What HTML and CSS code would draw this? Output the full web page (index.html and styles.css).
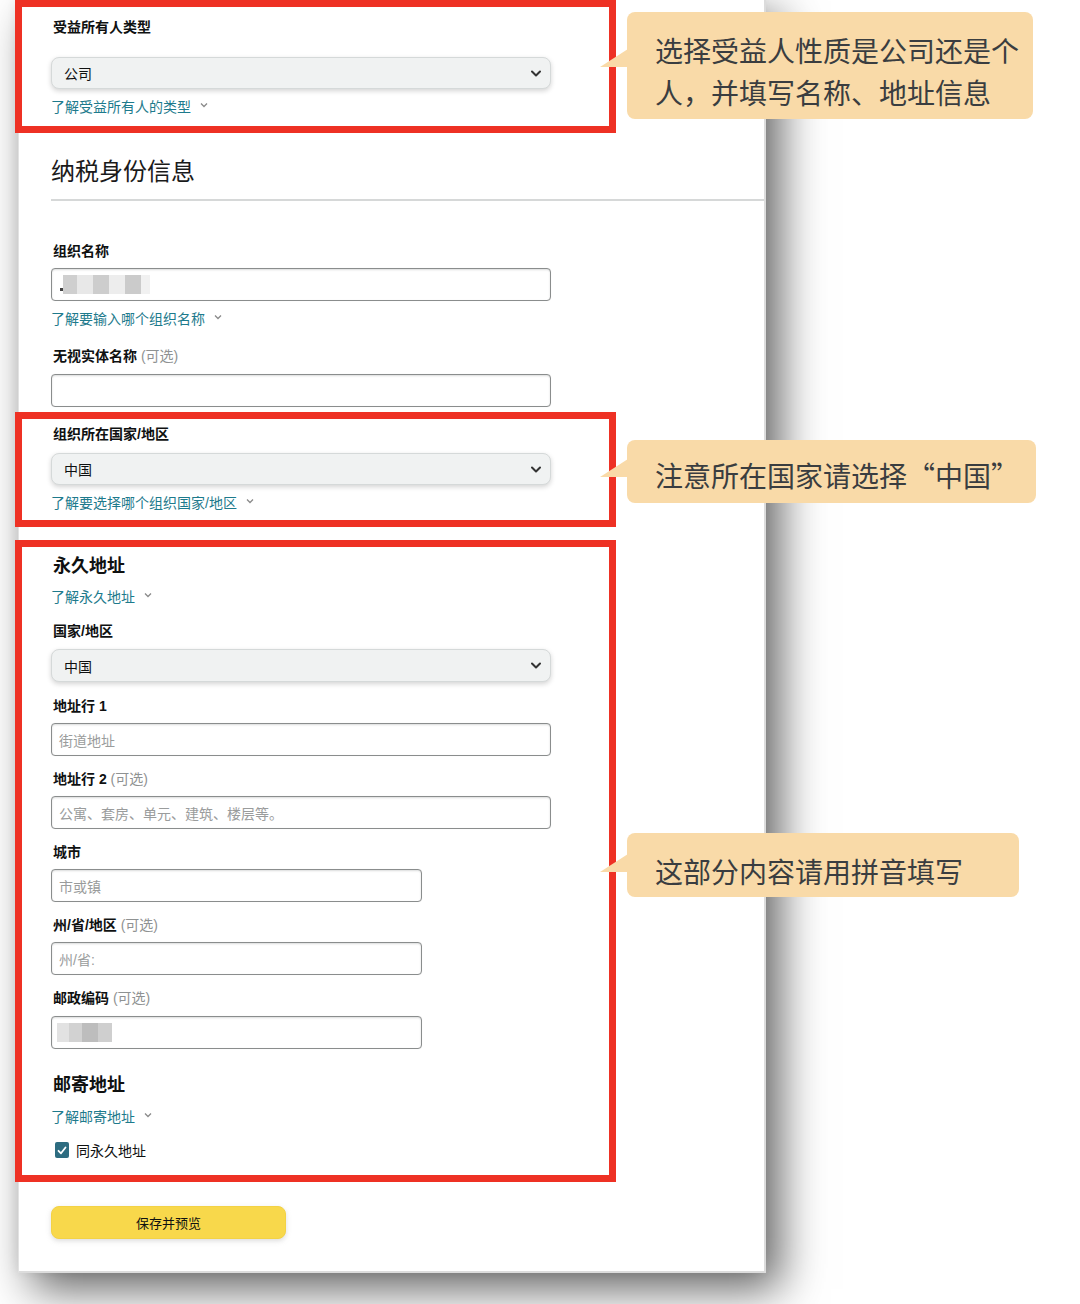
FILE: index.html
```html
<!DOCTYPE html>
<html lang="zh-CN">
<head>
<meta charset="utf-8">
<title>纳税身份信息</title>
<link rel="stylesheet" href="styles.css">
</head>
<body>
<div class="stage">
  <div class="card">
    <div class="mark mark-top">
      <div class="label">受益所有人类型</div>
      <div class="select select-first"><span>公司</span><svg class="chev" width="10" height="7" viewBox="0 0 10 7"><path d="M1 1.5 L5 5.5 L9 1.5" fill="none" stroke="#333" stroke-width="2" stroke-linecap="round" stroke-linejoin="round"/></svg></div>
      <div class="link">了解受益所有人的类型<svg class="lchev" width="8" height="6" viewBox="0 0 8 6"><path d="M1 1.5 L4 4.5 L7 1.5" fill="none" stroke="#8a8a8a" stroke-width="1.3"/></svg></div>
    </div>

    <h2 class="heading">纳税身份信息</h2>
    <div class="rule"></div>

    <div class="label label-org">组织名称</div>
    <div class="input"><span class="blur blur-name"><i></i><i></i><i></i><i></i><i></i><i></i><i></i></span></div>
    <div class="link">了解要输入哪个组织名称<svg class="lchev" width="8" height="6" viewBox="0 0 8 6"><path d="M1 1.5 L4 4.5 L7 1.5" fill="none" stroke="#8a8a8a" stroke-width="1.3"/></svg></div>

    <div class="label label-after-link">无视实体名称 <span class="opt">(可选)</span></div>
    <div class="input input-gap8"></div>

    <div class="mark mark-country">
      <div class="label">组织所在国家/地区</div>
      <div class="select select-gap9"><span>中国</span><svg class="chev" width="10" height="7" viewBox="0 0 10 7"><path d="M1 1.5 L5 5.5 L9 1.5" fill="none" stroke="#333" stroke-width="2" stroke-linecap="round" stroke-linejoin="round"/></svg></div>
      <div class="link">了解要选择哪个组织国家/地区<svg class="lchev" width="8" height="6" viewBox="0 0 8 6"><path d="M1 1.5 L4 4.5 L7 1.5" fill="none" stroke="#8a8a8a" stroke-width="1.3"/></svg></div>
    </div>

    <div class="mark mark-address">
      <div class="section-title">永久地址</div>
      <div class="link link-gap9">了解永久地址<svg class="lchev" width="8" height="6" viewBox="0 0 8 6"><path d="M1 1.5 L4 4.5 L7 1.5" fill="none" stroke="#8a8a8a" stroke-width="1.3"/></svg></div>

      <div class="label label-gap14">国家/地区</div>
      <div class="select select-tall"><span>中国</span><svg class="chev" width="10" height="7" viewBox="0 0 10 7"><path d="M1 1.5 L5 5.5 L9 1.5" fill="none" stroke="#333" stroke-width="2" stroke-linecap="round" stroke-linejoin="round"/></svg></div>

      <div class="label label-gap14">地址行 1</div>
      <div class="input"><span class="ph">街道地址</span></div>

      <div class="label">地址行 2 <span class="opt">(可选)</span></div>
      <div class="input"><span class="ph">公寓、套房、单元、建筑、楼层等。</span></div>

      <div class="label">城市</div>
      <div class="input input-short"><span class="ph">市或镇</span></div>

      <div class="label">州/省/地区 <span class="opt">(可选)</span></div>
      <div class="input input-short"><span class="ph">州/省:</span></div>

      <div class="label">邮政编码 <span class="opt">(可选)</span></div>
      <div class="input input-short input-gap8"><span class="blur blur-zip"><i></i><i></i><i></i><i></i></span></div>

      <div class="section-title section-gap24">邮寄地址</div>
      <div class="link link-gap10">了解邮寄地址<svg class="lchev" width="8" height="6" viewBox="0 0 8 6"><path d="M1 1.5 L4 4.5 L7 1.5" fill="none" stroke="#8a8a8a" stroke-width="1.3"/></svg></div>

      <div class="check-row">
        <span class="checkbox"><svg width="10" height="9" viewBox="0 0 10 9"><path d="M1.5 4.8 L4 7.3 L8.5 1.5" fill="none" stroke="#fff" stroke-width="1.8" stroke-linecap="round" stroke-linejoin="round"/></svg></span>
        <span>同永久地址</span>
      </div>
    </div>

    <div class="button">保存并预览</div>
  </div>

  <div class="note note-1">选择受益人性质是公司还是个<br>人，并填写名称、地址信息</div>
  <div class="note note-2">注意所在国家请选择“中国”</div>
  <div class="note note-3">这部分内容请用拼音填写</div>
</div>
</body>
</html>
```

FILE: styles.css
```css
* { box-sizing: border-box; }

html, body {
  margin: 0;
  padding: 0;
  background: #ffffff;
}

body {
  width: 1080px;
  height: 1304px;
  overflow: hidden;
  font-family: "Liberation Sans", "Noto Sans CJK SC", sans-serif;
  color: #0f1111;
}

.stage {
  position: relative;
  width: 1080px;
  height: 1304px;
}

/* ---------- card ---------- */
.card {
  margin-left: 18px;
  width: 748px;
  padding: 0 0 32px 32px;
  background: #ffffff;
  border-left: 1px solid #e2e2e2;
  border-right: 2px solid #dcdcdc;
  border-bottom: 2px solid #dcdcdc;
  box-shadow: 14px 16px 42px rgba(0, 0, 0, 0.62), -3px 0 10px rgba(0, 0, 0, 0.05);
}

/* ---------- red annotation boxes ---------- */
.mark {
  margin-left: -36px;
  width: 601px;
  border: 7px solid #ee3124;
  padding-left: 29px;
}
.mark-top { padding-top: 10px; padding-bottom: 9px; }
.mark-country { margin-top: 5px; padding-top: 5px; padding-bottom: 7px; }
.mark-address { margin-top: 13px; padding-top: 7px; padding-bottom: 15px; }

/* ---------- text ---------- */
.label {
  margin-top: 13px;
  padding-left: 2px;
  font-size: 14px;
  line-height: 20px;
  font-weight: 700;
  color: #0f1111;
}
.mark > .label:first-child { margin-top: 0; }
.label-org { margin-top: 40px; }
.label-after-link { margin-top: 17px; }
.label-gap14 { margin-top: 14px; }

.opt {
  font-weight: 400;
  color: #8f9292;
}

.section-title {
  padding-left: 2px;
  font-size: 18px;
  line-height: 24px;
  font-weight: 700;
  color: #0f1111;
}
.section-gap24 { margin-top: 24px; }

.heading {
  margin: 21px 0 0 0;
  font-size: 24px;
  line-height: 32px;
  font-weight: 400;
  color: #1a1a1a;
  font-family: "Noto Sans CJK SC", sans-serif;
}

.rule {
  margin-top: 13px;
  height: 2px;
  background: #d6d8d8;
}

.link {
  display: flex;
  align-items: center;
  margin-top: 8px;
  height: 20px;
  font-size: 14px;
  line-height: 20px;
  color: #1d7a8c;
}
.link-gap9 { margin-top: 9px; }
.link-gap10 { margin-top: 10px; }
.lchev {
  margin-left: 9px;
  margin-top: -5px;
}

/* ---------- controls ---------- */
.select {
  display: flex;
  align-items: center;
  justify-content: space-between;
  width: 500px;
  height: 32px;
  margin-top: 7px;
  padding: 0 9px 0 12px;
  background: #f0f2f2;
  border: 1px solid #d5d9d9;
  border-radius: 8px;
  box-shadow: 0 2px 5px rgba(15, 17, 17, 0.18);
  font-size: 14px;
  color: #0f1111;
}
.select-first { margin-top: 20px; }
.select-gap9 { margin-top: 9px; }
.select-tall { margin-top: 8px; height: 33px; }

.input {
  display: flex;
  align-items: center;
  width: 500px;
  height: 33px;
  margin-top: 7px;
  padding-left: 7px;
  background: #ffffff;
  border: 1px solid #8a8d8d;
  border-radius: 4px;
  box-shadow: inset 0 1px 2px rgba(15, 17, 17, 0.15), 0 0 1px rgba(0, 0, 0, 0.1);
  font-size: 14px;
}
.input-short { width: 371px; }
.input-gap8 { margin-top: 8px; }

.ph { color: #9a9c9c; }

/* pixelated (blurred-out) private data */
.blur {
  display: flex;
  height: 19px;
}
.blur i { display: block; height: 19px; }
.blur-name { margin-left: 1px; }
.blur-name i:nth-child(1) { width: 3px; background: linear-gradient(#fff 70%, #444 70%, #444 85%, #fff 85%); }
.blur-name i:nth-child(2) { width: 14px; background: #cfcfcf; }
.blur-name i:nth-child(3) { width: 16px; background: #e8e8e8; }
.blur-name i:nth-child(4) { width: 16px; background: #cdcdcd; }
.blur-name i:nth-child(5) { width: 16px; background: #ededed; }
.blur-name i:nth-child(6) { width: 16px; background: #cbcbcb; }
.blur-name i:nth-child(7) { width: 9px; background: #f1f1f1; }

.blur-zip { margin-left: -2px; }
.blur-zip i:nth-child(1) { width: 12px; background: #e2e2e2; }
.blur-zip i:nth-child(2) { width: 13px; background: #d2d2d2; }
.blur-zip i:nth-child(3) { width: 16px; background: #bdbdbd; }
.blur-zip i:nth-child(4) { width: 14px; background: #cfcfcf; }

/* ---------- checkbox ---------- */
.check-row {
  display: flex;
  align-items: center;
  gap: 7px;
  margin-top: 13px;
  height: 20px;
  padding-left: 4px;
  font-size: 14px;
  color: #0f1111;
}
.checkbox {
  display: flex;
  align-items: center;
  justify-content: center;
  width: 14px;
  height: 16px;
  background: #2d6c80;
  border-radius: 2px;
}

/* ---------- button ---------- */
.button {
  display: flex;
  align-items: center;
  justify-content: center;
  width: 235px;
  height: 33px;
  margin-top: 24px;
  background: #f8d84b;
  border: 1px solid #f3d245;
  border-radius: 8px;
  box-shadow: 0 2px 5px rgba(180, 180, 180, 0.45);
  font-size: 13px;
  color: #0f1111;
}

/* ---------- callouts ---------- */
.note {
  position: absolute;
  left: 627px;
  padding-left: 28px;
  background: #f9daa8;
  border-radius: 8px;
  font-family: "Noto Sans CJK SC", sans-serif;
  font-size: 28px;
  line-height: 42px;
  color: #3a3d40;
  white-space: nowrap;
}
.note::before {
  content: "";
  position: absolute;
  left: -27px;
  width: 28px;
  height: 18px;
  background: #f9daa8;
  clip-path: polygon(0 100%, 100% 0, 100% 100%);
}
.note-1 { top: 12px; width: 406px; height: 107px; padding-top: 17px; }
.note-1::before { top: 37px; }
.note-2 { top: 440px; width: 409px; height: 63px; padding-top: 14px; }
.note-2::before { top: 19px; }
.note-3 { top: 833px; width: 392px; height: 64px; padding-top: 17px; }
.note-3::before { top: 21px; }
```
